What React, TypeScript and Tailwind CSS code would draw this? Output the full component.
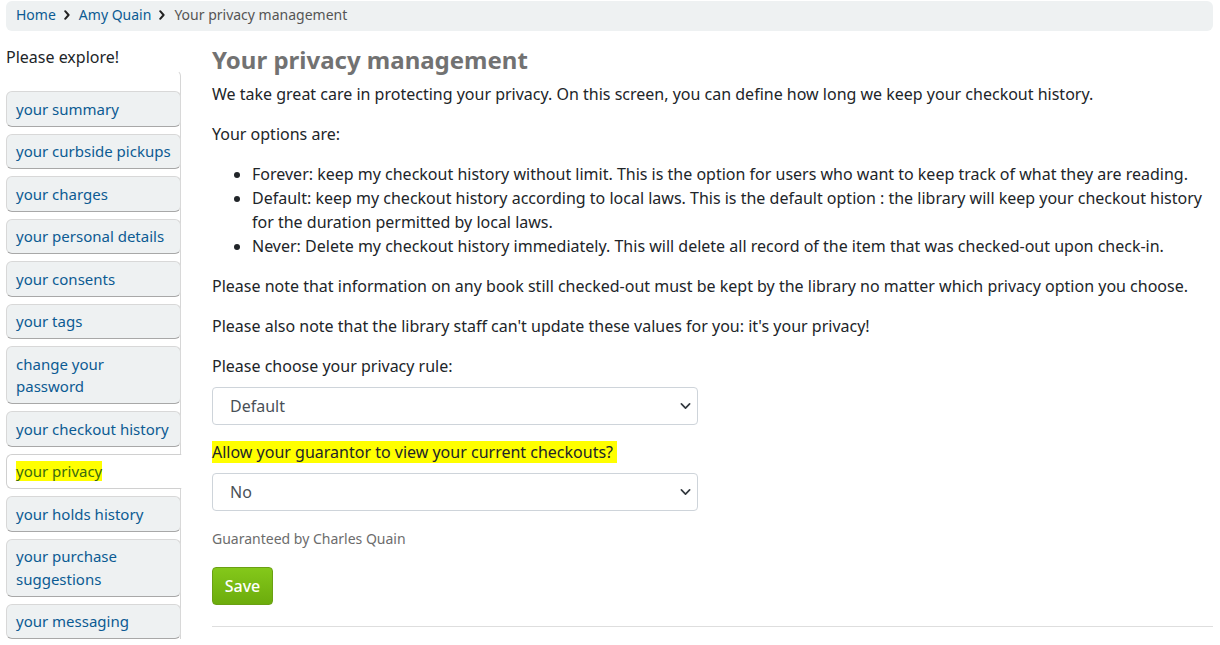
import React from "react";

const navItems = [
  "your summary",
  "your curbside pickups",
  "your charges",
  "your personal details",
  "your consents",
  "your tags",
  "change your password",
  "your checkout history",
  "your privacy",
  "your holds history",
  "your purchase suggestions",
  "your messaging",
];

function Chevron() {
  return (
    <svg className="absolute right-[6px] top-1/2 -translate-y-1/2 w-[11px] h-[11px]" viewBox="0 0 16 16" fill="none">
      <path d="M2 5l6 6 6-6" stroke="#343a40" strokeWidth="2.5" strokeLinecap="round" strokeLinejoin="round" />
    </svg>
  );
}

function Crumb() {
  return (
    <svg className="ml-[8px] mr-[9px] w-[6px] h-[10px]" viewBox="0 0 6 10" fill="none">
      <path d="M1.2 1.2L4.6 5 1.2 8.8" stroke="#222" strokeWidth="2" strokeLinecap="round" strokeLinejoin="round" />
    </svg>
  );
}

function Select({ value }: { value: string }) {
  return (
    <div className="relative w-[486px] h-[38px] border border-[#ced4da] rounded-[4px] bg-white flex items-center pl-[17px] text-[16px] text-[#495057]">
      {value}
      <Chevron />
    </div>
  );
}

export default function App() {
  return (
    <div className="min-h-[645px] bg-white text-[#212529] font-['Noto_Sans',sans-serif] px-[6px] pt-px">
      {/* Breadcrumb */}
      <div className="h-[30px] rounded-[6px] bg-[#eef1f2] flex items-center pl-[10px] pb-[3px] text-[14px] w-[1207px]">
        <a href="#" className="text-[#0c5b93]">Home</a>
        <Crumb />
        <a href="#" className="text-[#0c5b93]">Amy Quain</a>
        <Crumb />
        <span className="text-[#555]">Your privacy management</span>
      </div>

      <div className="flex mt-[14px]">
        {/* Sidebar */}
        <div className="w-[175px] shrink-0">
          <div className="text-[16px] leading-[24px] h-[24px]">Please explore!</div>
          <ul className="mt-[1px] pt-[20px] border-r border-[#d6d6d6] rounded-tr-[6px] border-t border-t-transparent flex flex-col gap-[7px]">
            {navItems.map((item) => {
              const active = item === "your privacy";
              return (
                <li
                  key={item}
                  className={
                    active
                      ? "-mr-[2px] bg-white border border-[#d0d0d0] border-r-white rounded-l-[6px] px-[9px] py-[5.5px] text-[15px] leading-[22.5px] text-[#0c5b93]"
                      : "-mr-px bg-[#eef1f2] border border-[#d8d8d8] border-b-[#a8a8a8] rounded-[6px] px-[9px] py-[5.5px] text-[15px] leading-[22.5px] text-[#0c5b93]"
                  }
                >
                  {active ? <span className="bg-[#ffff00] text-[#3a6a10]">{item}</span> : item}
                </li>
              );
            })}
          </ul>
        </div>

        {/* Main */}
        <div className="flex-1 pl-[31px]">
          <h1 className="text-[24px] leading-[30px] font-bold text-[#727272]">Your privacy management</h1>
          <p className="mt-[7px] text-[16px] leading-[24px]">
            We take great care in protecting your privacy. On this screen, you can define how long we keep your checkout history.
          </p>
          <p className="mt-[16px] text-[16px] leading-[24px]">Your options are:</p>
          <ul className="mt-[16px] pl-[40px] list-disc text-[16px] leading-[24px]">
            <li>Forever: keep my checkout history without limit. This is the option for users who want to keep track of what they are reading.</li>
            <li>Default: keep my checkout history according to local laws. This is the default option : the library will keep your checkout history for the duration permitted by local laws.</li>
            <li>Never: Delete my checkout history immediately. This will delete all record of the item that was checked-out upon check-in.</li>
          </ul>
          <p className="mt-[16px] text-[16px] leading-[24px]">
            Please note that information on any book still checked-out must be kept by the library no matter which privacy option you choose.
          </p>
          <p className="mt-[16px] text-[16px] leading-[24px]">
            Please also note that the library staff can't update these values for you: it's your privacy!
          </p>
          <p className="mt-[16px] text-[16px] leading-[24px]">Please choose your privacy rule:</p>
          <div className="mt-[9px]">
            <Select value="Default" />
          </div>
          <p className="mt-[15px] text-[16px] leading-[24px]">
            <span className="bg-[#ffff00] pr-[4px]">Allow your guarantor to view your current checkouts?</span>
          </p>
          <div className="mt-[9px]">
            <Select value="No" />
          </div>
          <p className="mt-[17px] text-[14px] leading-[21px] text-[#6c6c6c]">Guaranteed by Charles Quain</p>
          <button className="mt-[18px] h-[38px] w-[61px] rounded-[4px] border border-[#6aa013] bg-gradient-to-b from-[#84c81a] to-[#6cac0c] text-white text-[16px] font-medium">
            Save
          </button>
          <hr className="mt-[21px] border-t border-[#dedede] w-[1001px]" />
        </div>
      </div>
    </div>
  );
}
